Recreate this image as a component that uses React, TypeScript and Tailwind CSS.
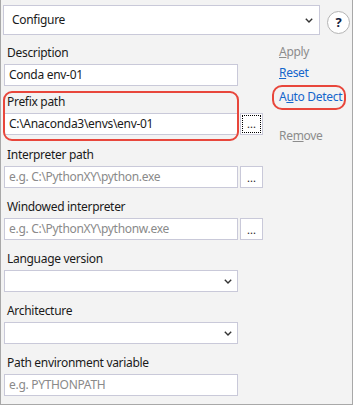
import React from 'react';

const font = { fontFamily: '"Noto Sans", "Open Sans", sans-serif' };

function Chevron() {
  return (
    <svg width="8" height="5" viewBox="0 0 8 5" className="shrink-0">
      <polyline points="0.8,0.8 4,4 7.2,0.8" fill="none" stroke="#333" strokeWidth="1.4" />
    </svg>
  );
}

function TextBox({ value, placeholder }: { value?: string; placeholder?: string }) {
  return (
    <div className="w-[234px] h-[22px] bg-white border border-[#c9c9d9] flex items-center pl-[4px] text-[12px] tracking-[-0.3px]">
      {value ? (
        <span className="text-[#1a1a1a]">{value}</span>
      ) : (
        <span className="text-[#8a8a8a]">{placeholder}</span>
      )}
    </div>
  );
}

function SelectBox() {
  return (
    <div className="w-[234px] h-[22px] bg-white border border-[#c9c9d9] flex items-center justify-end pr-[5px]">
      <Chevron />
    </div>
  );
}

function BrowseButton({ focused }: { focused?: boolean }) {
  return (
    <div className="ml-[2px] w-[23px] h-[22px] bg-white border border-[#c9c9d9] flex items-center justify-center p-[1px]">
      <div
        className={`w-full h-full flex items-end justify-center pb-[3px] text-[11px] leading-none text-[#1a1a1a] ${
          focused ? 'border border-dotted border-black' : ''
        }`}
      >
        ...
      </div>
    </div>
  );
}

function Label({ children }: { children: React.ReactNode }) {
  return (
    <div className="h-[16px] leading-[16px] pl-[3px] text-[12px] tracking-[-0.3px] text-[#1a1a1a]">{children}</div>
  );
}

export default function App() {
  return (
    <div style={font} className="w-[353px] h-[405px] bg-[#f3f3f3] border-x border-b border-[#a8a8a8] overflow-hidden">
      {/* Top row */}
      <div className="flex items-start pt-[5px] pl-[2px]">
        <div className="w-[317px] h-[30px] bg-white border border-[#c9c9d9] flex items-center justify-between pl-[8px] pr-[6px] text-[12px] tracking-[-0.3px] text-[#1a1a1a]">
          <span>Configure</span>
          <Chevron />
        </div>
        <div className="ml-[7px] mt-[6px] w-[23px] h-[23px] rounded-full bg-white border border-[#b4b4b4] flex items-center justify-center text-[13px] font-bold text-[#14213d]">
          ?
        </div>
      </div>

      <div className="flex">
        {/* Fields */}
        <div className="pl-[3px] mt-[10px] w-[262px]">
          <Label>Description</Label>
          <div className="mt-[3px] mb-[8px]">
            <TextBox value="Conda env-01" />
          </div>

          <div className="relative">
            <div className="absolute left-[-1px] top-[-3px] w-[236px] h-[50px] rounded-[9px] border-2 border-[#e8463b] pointer-events-none" />
            <Label>Prefix path</Label>
            <div className="mt-[3px] mb-[12px] flex">
              <TextBox value={'C:\\Anaconda3\\envs\\env-01'} />
              <BrowseButton focused />
            </div>
          </div>

          <Label>Interpreter path</Label>
          <div className="mt-[3px] mb-[11px] flex">
            <TextBox placeholder={'e.g. C:\\PythonXY\\python.exe'} />
            <BrowseButton />
          </div>

          <Label>Windowed interpreter</Label>
          <div className="mt-[3px] mb-[11px] flex">
            <TextBox placeholder={'e.g. C:\\PythonXY\\pythonw.exe'} />
            <BrowseButton />
          </div>

          <Label>Language version</Label>
          <div className="mt-[3px] mb-[11px]">
            <SelectBox />
          </div>

          <Label>Architecture</Label>
          <div className="mt-[3px] mb-[11px]">
            <SelectBox />
          </div>

          <Label>Path environment variable</Label>
          <div className="mt-[3px]">
            <TextBox placeholder="e.g. PYTHONPATH" />
          </div>
        </div>

        {/* Actions */}
        <div className="pt-[9px] pl-[16px] text-[12px] tracking-[-0.3px] leading-[16px] flex flex-col items-start">
          <div className="text-[#8c8c8c]">
            <span className="underline">A</span>pply
          </div>
          <div className="mt-[5px] text-[#1466cc]">
            <span className="underline">R</span>eset
          </div>
          <div className="relative mt-[8px] text-[#1466cc] whitespace-nowrap">
            <div className="absolute left-[-7px] top-[-4px] w-[74px] h-[25px] rounded-[10px] border-2 border-[#e8463b] pointer-events-none" />
            A<span className="underline">u</span>to Detect
          </div>
          <div className="mt-[23px] text-[#8c8c8c]">
            Re<span className="underline">m</span>ove
          </div>
        </div>
      </div>
    </div>
  );
}
